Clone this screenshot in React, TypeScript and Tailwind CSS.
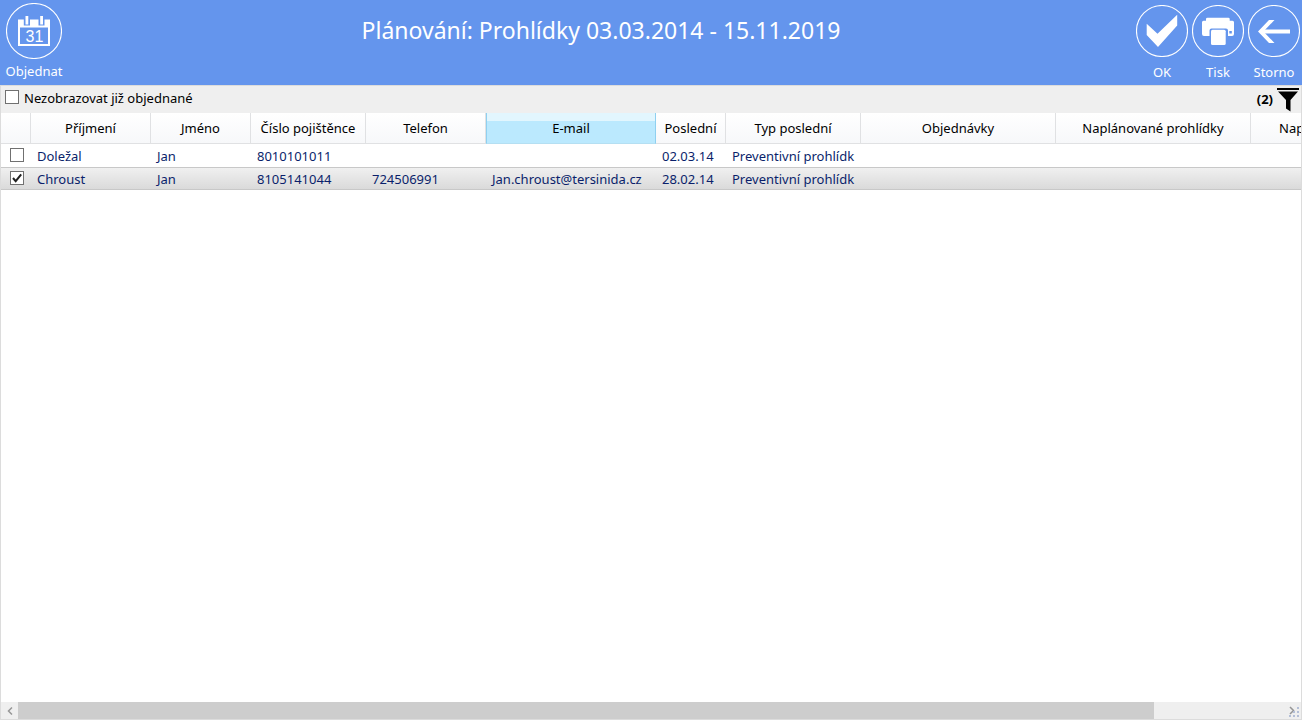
import { useState } from "react";
import type { ReactNode } from "react";

const columns = [
  { label: "Příjmení", width: "w-[120px]" },
  { label: "Jméno", width: "w-[100px]" },
  { label: "Číslo pojištěnce", width: "w-[115px]" },
  { label: "Telefon", width: "w-[120px]" },
  { label: "E-mail", width: "w-[170px]" },
  { label: "Poslední", width: "w-[70px]" },
  { label: "Typ poslední", width: "w-[135px]" },
  { label: "Objednávky", width: "w-[195px]" },
  { label: "Naplánované prohlídky", width: "w-[195px]" },
  { label: "Nap", width: "w-[198px]" },
];

const patients = [
  ["Doležal", "Jan", "8010101011", "", "", "02.03.14", "Preventivní prohlídk", "", "", ""],
  ["Chroust", "Jan", "8105141044", "724506991", "Jan.chroust@tersinida.cz", "28.02.14", "Preventivní prohlídk", "", "", ""],
];

function Tick({ id, label, checked, onChange }: { id: string; label?: string; checked: boolean; onChange: (v: boolean) => void }) {
  return (
    <span className="grid size-[14px] shrink-0">
      <input
        id={id}
        type="checkbox"
        aria-label={label}
        checked={checked}
        onChange={(e) => onChange(e.target.checked)}
        className="peer col-start-1 row-start-1 size-[14px] appearance-none border border-[#707070] bg-white"
      />
      <svg viewBox="0 0 14 14" className="pointer-events-none invisible col-start-1 row-start-1 size-[14px] peer-checked:visible">
        <path d="M3 7 L5.7 10.2 L11.2 3.4" fill="none" stroke="#212121" strokeWidth="2" />
      </svg>
    </span>
  );
}

function RoundAction({ label, large, children }: { label: string; large?: boolean; children: ReactNode }) {
  return (
    <button type="button" className={"flex flex-col items-center " + (large ? "w-[68px] pt-[3px]" : "w-14 pt-[5px]")}>
      <svg viewBox={large ? "0 0 56 56" : "0 0 52 52"} className={large ? "size-[56px]" : "size-[52px]"} fill="none">
        <circle cx={large ? 28 : 26} cy={large ? 28 : 26} r={large ? 27.5 : 25.5} stroke="white" strokeWidth="1.1" />
        {children}
      </svg>
      <span className={"text-[13px] leading-[18px] " + (large ? "mt-[3px]" : "mt-[6px]")}>{label}</span>
    </button>
  );
}

export default function App() {
  const [hideOrdered, setHideOrdered] = useState(false);
  const [selected, setSelected] = useState([false, true]);

  return (
    <div className="flex min-h-screen flex-col overflow-hidden bg-white font-['Noto_Sans','Open_Sans',sans-serif] text-[13px] text-black">
      <header className="flex h-[85px] items-start bg-[#6495ed] text-white">
        <RoundAction label="Objednat" large>
          <path
            fill="white"
            fillRule="evenodd"
            d="M12 16.5H17.800V22.500H24V16.500H32.500V22.500H38.500V16.500H44V43H12ZM14 24.500V41H42V24.500Z"
          />
          <path fill="white" d="M19.500 13H22.300V21.500H19.500ZM34.200 13H37V21.500H34.200Z" />
          <text x="28.500" y="38.500" textAnchor="middle" fill="white" fontSize="16" fontFamily="Liberation Sans, sans-serif">
            31
          </text>
        </RoundAction>
        <h1 className="flex-1 pt-[14px] text-center text-[23px] leading-8">Plánování: Prohlídky 03.03.2014 - 15.11.2019</h1>
        <div className="flex">
          <RoundAction label="OK">
            <path fill="white" d="M10.700 18.700L21.500 28.700L41.200 9.700V20.500L22 42L10.700 30Z" />
          </RoundAction>
          <RoundAction label="Tisk">
            <path
              fill="white"
              d="M15.5 12.700H36.300Q37.700 12.700 37.700 14V15.700H40.500Q42 15.700 42 17.200V29Q42 31 40 31H36V25.500Q36 23.500 34 23.500H19.500Q17.500 23.500 17.500 25.500V31H12Q10 31 10 29V17.200Q10 15.700 11.500 15.700H14V14Q14 12.700 15.500 12.700Z"
            />
            <rect x="19" y="24.700" width="14.700" height="15.300" rx="1.5" fill="white" />
            <rect x="37.300" y="26" width="2.500" height="2.500" fill="#6495ed" />
          </RoundAction>
          <RoundAction label="Storno">
            <path d="M42 26.500H13" stroke="white" strokeWidth="4" />
            <path d="M21 15H26.500L15.500 26.500L26.500 38H21L10 26.500Z" fill="white" />
          </RoundAction>
        </div>
      </header>

      <main className="flex flex-1 flex-col border-x border-b border-[#dcdcdc]">
        <div className="flex h-7 items-center justify-between border-t border-[#dcdcdc] bg-[#efefef] pl-1">
          <div className="flex items-start gap-[5px] pb-1">
            <Tick id="hide-ordered" checked={hideOrdered} onChange={setHideOrdered} />
            <label htmlFor="hide-ordered" className="leading-4">
              Nezobrazovat již objednané
            </label>
          </div>
          <div className="flex items-center gap-1 pr-[2px]">
            <span className="text-[13px] font-bold">(2)</span>
            <button type="button" aria-label="Filtr">
              <svg viewBox="0 0 22 24" className="h-6 w-[22px]">
                <path d="M0 0H22V2H0ZM1 3.500H21L13.500 12V23.500L9 20.500V12Z" fill="black" />
              </svg>
            </button>
          </div>
        </div>

        <div className="flex-1 overflow-hidden">
          <table className="w-[1448px] table-fixed border-separate border-spacing-0">
            <thead>
              <tr className="h-[31px]">
                <th className="w-[30px] border-r border-b border-[#e0e1e3] bg-linear-to-b from-white to-[#f7f8fa]" aria-label="Výběr" />
                {columns.map((c, i) => (
                  <th
                    key={c.label}
                    className={
                      "overflow-hidden border-b p-0 pt-[2px] font-normal whitespace-nowrap " +
                      c.width +
                      (c.label === "E-mail"
                        ? " border-x border-[#8fd0f0] border-b-[#b5dff2] bg-linear-to-b from-[#e2f6fe] from-25% to-[#bbe9fe] to-25%"
                        : " border-r border-[#e0e1e3] bg-linear-to-b from-white to-[#f7f8fa]") +
                      (i === columns.length - 1 ? " pl-7 text-left" : " text-center")
                    }
                  >
                    {c.label}
                  </th>
                ))}
              </tr>
            </thead>
            <tbody className="text-[#0a1f6b]">
              {patients.map((cells, r) => {
                const edge = selected[r] ? "border-y border-[#c8c8c8] bg-linear-to-b from-[#f0f0f0] to-[#dadada] " : "";
                return (
                  <tr key={cells[0]} className="h-[23px]">
                    <td className={edge + "p-0 pb-[2px] pl-[9px]"}>
                      <Tick
                        id={"patient-" + r}
                        label={cells[0]}
                        checked={selected[r]}
                        onChange={(v) => setSelected(selected.map((s, i) => (i === r ? v : s)))}
                      />
                    </td>
                    {cells.map((cell, i) => (
                      <td key={i} className={edge + "overflow-hidden p-0 pl-[6px] leading-5 whitespace-nowrap"}>
                        {cell}
                      </td>
                    ))}
                  </tr>
                );
              })}
            </tbody>
          </table>
        </div>

        <div className="flex h-[17px] bg-[#efefef]">
          <button type="button" aria-label="Posunout doleva" className="flex w-[17px] items-center justify-center">
            <svg viewBox="0 0 6 8" className="h-2 w-[6px]" fill="none">
              <path d="M5 0.500L1.500 4L5 7.500" stroke="#969696" strokeWidth="1.500" />
            </svg>
          </button>
          <div className="flex-1">
            <div className="h-full w-[89.7%] bg-[#cdcdcd]" />
          </div>
          <button type="button" aria-label="Posunout doprava" className="flex w-[17px] items-center justify-end">
            <svg viewBox="0 0 14 17" className="h-[17px] w-[14px]" fill="none">
              <path d="M3 5L6.500 8.500L3 12" stroke="#969696" strokeWidth="1.500" />
              <path d="M10 5h2v2h-2zM6 9h2v2h-2zM10 9h2v2h-2zM2 13h2v2h-2zM6 13h2v2h-2zM10 13h2v2h-2z" fill="#b4bfd6" />
            </svg>
          </button>
        </div>
      </main>
    </div>
  );
}
